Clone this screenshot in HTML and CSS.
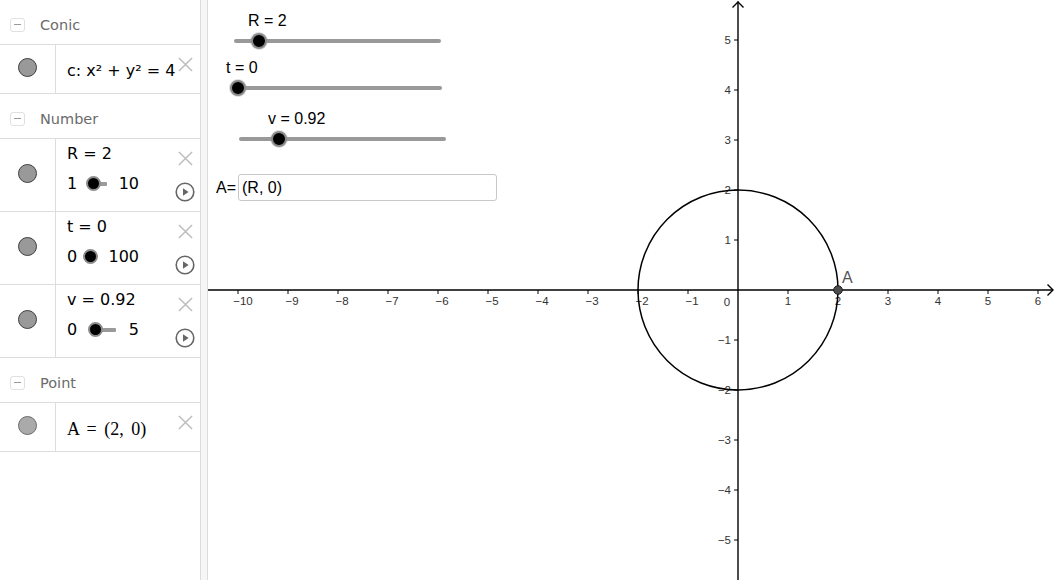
FILE: index.html
```html
<!DOCTYPE html>
<html>
<head>
<meta charset="utf-8">
<link rel="stylesheet" href="styles.css">
</head>
<body>
<div class="app">
  <aside class="algebra">
    <div class="group-head"><span class="toggle"></span><span class="group-name">Conic</span></div>
    <div class="item short">
      <div class="marble-cell"><span class="marble"></span></div>
      <div class="item-body"><div class="formula">c: x² + y² = 4</div></div>
      <div class="item-tools">
        <svg class="close" viewBox="0 0 16 16"><path d="M1 1L15 15M15 1L1 15"/></svg>
      </div>
    </div>

    <div class="group-head"><span class="toggle"></span><span class="group-name">Number</span></div>
    <div class="item tall">
      <div class="marble-cell"><span class="marble"></span></div>
      <div class="item-body">
        <div class="formula">R = 2</div>
        <div class="mini-row">
          <span class="mini-min">1</span>
          <span class="mini-slider"><span class="mini-track" style="left:11px;width:13px"></span><span class="mini-knob" style="left:3px"></span></span>
          <span class="mini-max">10</span>
        </div>
      </div>
      <div class="item-tools">
        <svg class="close" viewBox="0 0 16 16"><path d="M1 1L15 15M15 1L1 15"/></svg>
        <svg class="play" viewBox="0 0 20 20"><circle cx="10" cy="10" r="8.8"/><path d="M8 6.2L13.6 10L8 13.8Z"/></svg>
      </div>
    </div>
    <div class="item tall">
      <div class="marble-cell"><span class="marble"></span></div>
      <div class="item-body">
        <div class="formula">t = 0</div>
        <div class="mini-row">
          <span class="mini-min">0</span>
          <span class="mini-slider"><span class="mini-knob" style="left:0px"></span></span>
          <span class="mini-max">100</span>
        </div>
      </div>
      <div class="item-tools">
        <svg class="close" viewBox="0 0 16 16"><path d="M1 1L15 15M15 1L1 15"/></svg>
        <svg class="play" viewBox="0 0 20 20"><circle cx="10" cy="10" r="8.8"/><path d="M8 6.2L13.6 10L8 13.8Z"/></svg>
      </div>
    </div>
    <div class="item tall">
      <div class="marble-cell"><span class="marble"></span></div>
      <div class="item-body">
        <div class="formula">v = 0.92</div>
        <div class="mini-row">
          <span class="mini-min">0</span>
          <span class="mini-slider"><span class="mini-track" style="left:13px;width:20px"></span><span class="mini-knob" style="left:5px"></span></span>
          <span class="mini-max">5</span>
        </div>
      </div>
      <div class="item-tools">
        <svg class="close" viewBox="0 0 16 16"><path d="M1 1L15 15M15 1L1 15"/></svg>
        <svg class="play" viewBox="0 0 20 20"><circle cx="10" cy="10" r="8.8"/><path d="M8 6.2L13.6 10L8 13.8Z"/></svg>
      </div>
    </div>

    <div class="group-head"><span class="toggle"></span><span class="group-name">Point</span></div>
    <div class="item short">
      <div class="marble-cell"><span class="marble light"></span></div>
      <div class="item-body"><div class="formula math">A = (2, 0)</div></div>
      <div class="item-tools">
        <svg class="close" viewBox="0 0 16 16"><path d="M1 1L15 15M15 1L1 15"/></svg>
      </div>
    </div>
  </aside>

  <div class="splitter"></div>

  <main class="graphics">
    <svg class="canvas" width="848" height="580" viewBox="208 0 848 580">
      <g class="axes">
        <line x1="208" y1="290" x2="1053" y2="290"/>
        <polyline points="1047.5,284.5 1053,290 1047.5,295.5"/>
        <line x1="738" y1="1.5" x2="738" y2="580"/>
        <polyline points="732.5,7.5 738,2 743.5,7.5"/>
        <path d="M238 290v4M288 290v4M338 290v4M388 290v4M438 290v4M488 290v4M538 290v4M588 290v4M638 290v4M688 290v4M788 290v4M838 290v4M888 290v4M938 290v4M988 290v4M1038 290v4"/>
        <path d="M738 40h-4M738 90h-4M738 140h-4M738 190h-4M738 240h-4M738 340h-4M738 390h-4M738 440h-4M738 490h-4M738 540h-4"/>
      </g>
      <g class="xlabels">
        <text x="243" y="305">−10</text>
        <text x="292" y="305">−9</text>
        <text x="342" y="305">−8</text>
        <text x="392" y="305">−7</text>
        <text x="442" y="305">−6</text>
        <text x="492" y="305">−5</text>
        <text x="542" y="305">−4</text>
        <text x="592" y="305">−3</text>
        <text x="642" y="305">−2</text>
        <text x="692" y="305">−1</text>
        <text x="727" y="306">0</text>
        <text x="788" y="305">1</text>
        <text x="838" y="305">2</text>
        <text x="888" y="305">3</text>
        <text x="938" y="305">4</text>
        <text x="988" y="305">5</text>
        <text x="1038" y="305">6</text>
      </g>
      <g class="ylabels">
        <text x="731" y="44">5</text>
        <text x="731" y="94">4</text>
        <text x="731" y="144">3</text>
        <text x="731" y="194">2</text>
        <text x="731" y="244">1</text>
        <text x="731" y="344">−1</text>
        <text x="731" y="394">−2</text>
        <text x="731" y="444">−3</text>
        <text x="731" y="494">−4</text>
        <text x="731" y="544">−5</text>
      </g>
      <circle class="conic" cx="738" cy="290" r="100"/>
      <circle class="pointA" cx="838" cy="290" r="4.3"/>
      <text class="pointA-label" x="842" y="282.5">A</text>
    </svg>

    <div class="gslider s-r">
      <div class="gslider-label">R = 2</div>
      <div class="gtrack"><span class="gknob" style="left:16.5px"></span></div>
    </div>
    <div class="gslider s-t">
      <div class="gslider-label">t = 0</div>
      <div class="gtrack"><span class="gknob" style="left:-7.5px"></span></div>
    </div>
    <div class="gslider s-v">
      <div class="gslider-label">v = 0.92</div>
      <div class="gtrack"><span class="gknob" style="left:31.5px"></span></div>
    </div>

    <div class="ginput">
      <span class="ginput-label">A=</span>
      <span class="ginput-box">(R, 0)</span>
    </div>
  </main>
</div>
</body>
</html>
```

FILE: styles.css
```css
html, body {
  margin: 0;
  padding: 0;
  background: #fff;
}
body {
  width: 1056px;
  height: 580px;
  overflow: hidden;
  font-family: "DejaVu Sans", sans-serif;
  color: #000;
}
.app {
  display: flex;
  height: 580px;
}
.algebra {
  width: 200px;
  flex: none;
  border-right: 1px solid #dcdcdc;
  display: flex;
  flex-direction: column;
}
.splitter {
  width: 6px;
  flex: none;
  background: #f6f6f6;
  border-right: 1px solid #dcdcdc;
}
.graphics {
  flex: 1;
  position: relative;
  overflow: hidden;
}

/* algebra view */
.group-head {
  height: 45px;
  border-bottom: 1px solid #dddddd;
  display: flex;
  align-items: center;
  padding-top: 5px;
  box-sizing: border-box;
}
.toggle {
  width: 13px;
  height: 12px;
  margin-left: 10px;
  border: 1px solid #e0e0e0;
  border-radius: 3px;
  position: relative;
  box-sizing: content-box;
}
.toggle::after {
  content: "";
  position: absolute;
  left: 3px;
  right: 3px;
  top: 5.5px;
  height: 1.2px;
  background: #9a9a9a;
}
.group-name {
  margin-left: 15px;
  font-size: 14.5px;
  color: #6b6b6b;
}
.item {
  display: flex;
  border-bottom: 1px solid #dddddd;
}
.item.short { height: 48px; }
.item.tall { height: 72px; }
.marble-cell {
  width: 56px;
  flex: none;
  border-right: 1px solid #dddddd;
  display: flex;
  align-items: center;
  justify-content: center;
  padding-bottom: 4px;
  box-sizing: border-box;
}
.marble {
  width: 17px;
  height: 17px;
  border-radius: 50%;
  background: #999999;
  border: 1.3px solid #3d3d3d;
}
.marble.light {
  background: #aaaaaa;
  border-color: #6a6a6a;
}
.item-body {
  flex: 1;
  min-width: 0;
  padding-left: 11px;
  display: flex;
  flex-direction: column;
}
.item.short .item-body {
  justify-content: center;
  padding-top: 3px;
}
.item.tall .item-body {
  padding-top: 5px;
}
.formula {
  font-size: 16px;
  line-height: 20px;
  white-space: nowrap;
}
.formula.math {
  font-family: "Liberation Serif", serif;
  font-size: 18px;
  word-spacing: 3px;
}
.mini-row {
  display: flex;
  align-items: center;
  width: 72px;
  height: 20px;
  margin-top: 10px;
  font-size: 16px;
  line-height: 20px;
}
.mini-slider {
  position: relative;
  width: 36px;
  height: 16px;
  margin-left: 6px;
}
.mini-track {
  position: absolute;
  top: 6px;
  height: 4px;
  background: #9a9a9a;
  border-radius: 1px;
}
.mini-knob {
  position: absolute;
  top: 0;
  width: 11px;
  height: 11px;
  border-radius: 50%;
  background: #000;
  border: 2.5px solid #8c8c8c;
}
.mini-max {
  margin-left: auto;
}
.item-tools {
  width: 30px;
  flex: none;
  display: flex;
  flex-direction: column;
  align-items: center;
  padding-top: 12px;
  box-sizing: border-box;
}
.close {
  width: 15px;
  height: 15px;
  fill: none;
  stroke: #bdbdbd;
  stroke-width: 1.6;
}
.play {
  width: 20px;
  height: 20px;
  margin-top: 16px;
  fill: none;
  stroke: #666;
  stroke-width: 1.6;
}
.play path {
  fill: #666;
  stroke: none;
}

/* graphics view */
.canvas {
  position: absolute;
  left: 0;
  top: 0;
  display: block;
}
.axes line, .axes polyline, .axes path {
  stroke: #000;
  stroke-width: 1.4;
  fill: none;
}
.axes path {
  stroke-width: 1;
}
.xlabels text, .ylabels text {
  font-family: "Liberation Sans", sans-serif;
  font-size: 11.5px;
  fill: #333;
}
.xlabels text { text-anchor: middle; }
.ylabels text { text-anchor: end; }
.conic {
  fill: none;
  stroke: #000;
  stroke-width: 1.5;
}
.pointA {
  fill: #4d4d4d;
  stroke: #1a1a1a;
  stroke-width: 1;
}
.pointA-label {
  font-family: "Liberation Sans", sans-serif;
  font-size: 16px;
  fill: #555;
}
.gslider {
  position: absolute;
  font-family: "Liberation Sans", sans-serif;
  font-size: 16px;
}
.gslider-label {
  line-height: 18px;
  height: 18px;
  white-space: nowrap;
}
.gtrack {
  position: relative;
  width: 207px;
  height: 4px;
  margin-top: 9px;
  background: #999;
  border-radius: 2px;
}
.gknob {
  position: absolute;
  top: -6.5px;
  width: 12px;
  height: 12px;
  border-radius: 50%;
  background: #000;
  border: 2.5px solid #8a8a8a;
  box-shadow: 0 0 0 1px rgba(160,160,160,0.35);
}
.s-r { left: 26px; top: 12px; }
.s-r .gslider-label { margin-left: 14px; }
.s-t { left: 29px; top: 59px; }
.s-t .gslider-label { margin-left: -11px; }
.s-t .gtrack { width: 205px; }
.s-v { left: 31px; top: 110px; }
.s-v .gslider-label { margin-left: 29px; }
.ginput {
  position: absolute;
  left: 8px;
  top: 174px;
  display: flex;
  align-items: center;
  font-family: "Liberation Sans", sans-serif;
  font-size: 16px;
}
.ginput-label {
  width: 22px;
}
.ginput-box {
  width: 254px;
  height: 25px;
  border: 1px solid #c8c8c8;
  border-radius: 3px;
  padding-left: 3px;
  line-height: 25px;
  box-sizing: content-box;
}
```
